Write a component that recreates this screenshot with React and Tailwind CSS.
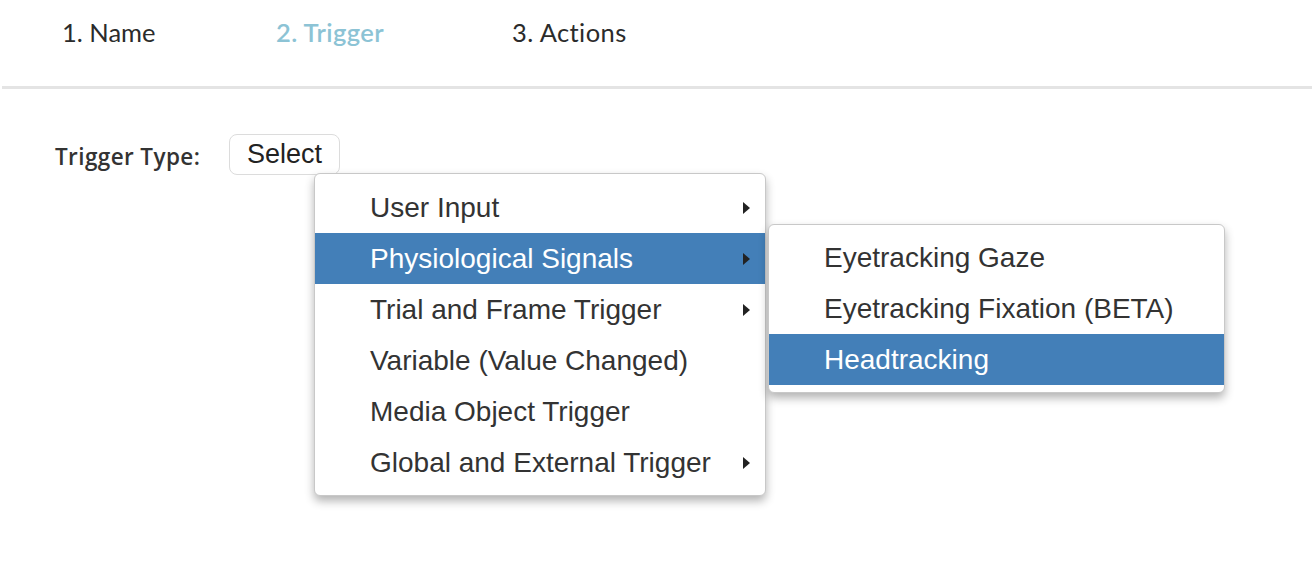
import React from "react";

const mainItems = [
    { label: "User Input", sub: true },
    { label: "Physiological Signals", sub: true, active: true },
    { label: "Trial and Frame Trigger", sub: true },
    { label: "Variable (Value Changed)" },
    { label: "Media Object Trigger" },
    { label: "Global and External Trigger", sub: true },
];

const subItems = [
    { label: "Eyetracking Gaze" },
    { label: "Eyetracking Fixation (BETA)" },
    { label: "Headtracking", active: true },
];

const Caret = () => (
    <span className="absolute right-[15px] top-1/2 -translate-y-1/2 w-0 h-0 border-y-[6px] border-y-transparent border-l-[7px] border-l-[#222]" />
);

const Item = ({ label, sub, active, children }) => (
    <li
        className={
            "relative h-[51px] flex items-center pl-[55px] " +
            (active ? "bg-[#437fb8] text-white" : "text-[#333]")
        }
    >
        <span>{label}</span>
        {sub && <Caret />}
        {children}
    </li>
);

export default function App() {
    return (
        <div
            className="w-full min-h-screen bg-white"
            style={{ fontFamily: "'Liberation Sans', Arial, sans-serif" }}
        >
            {/* steps */}
            <div className="h-[89px] border-b-[3px] border-[#e4e4e4] ml-[2px] flex items-start pt-[13px] pl-[60px] text-[25.5px] text-[#2b2b2b] font-['Lato',sans-serif]">
                <span className="w-[214px]">1. Name</span>
                <span className="w-[236px] font-semibold text-[#8cc3d5] tracking-[0.4px]">2. Trigger</span>
                <span className="tracking-[0.4px]">3. Actions</span>
            </div>

            <div className="flex items-center pt-[45px] pl-[55px]">
                <span className="w-[174px] pt-[4px] text-[22.5px] font-semibold text-[#333] tracking-[0.4px] font-['Open_Sans',sans-serif]">
                    Trigger Type:
                </span>

                <div className="relative">
                    <button className="h-[41px] px-[17px] rounded-lg border border-[#dcdcdc] bg-white text-[27px] text-[#222] leading-none">
                        Select
                    </button>

                    {/* dropdown */}
                    <ul className="absolute left-[85px] top-[39px] w-[452px] bg-white border border-[#c8c8c8] rounded-md pt-[8px] pb-[7px] text-[28px] shadow-[0_5px_10px_rgba(0,0,0,0.3)] z-10">
                        {mainItems.map((it) => (
                            <Item key={it.label} {...it}>
                                {it.active && (
                                    <ul className="absolute left-[453px] top-[-9px] w-[457px] bg-white border border-[#c8c8c8] rounded-md py-[7px] shadow-[0_5px_10px_rgba(0,0,0,0.3)]">
                                        {subItems.map((s) => (
                                            <Item key={s.label} {...s} />
                                        ))}
                                    </ul>
                                )}
                            </Item>
                        ))}
                    </ul>
                </div>
            </div>
        </div>
    );
}
